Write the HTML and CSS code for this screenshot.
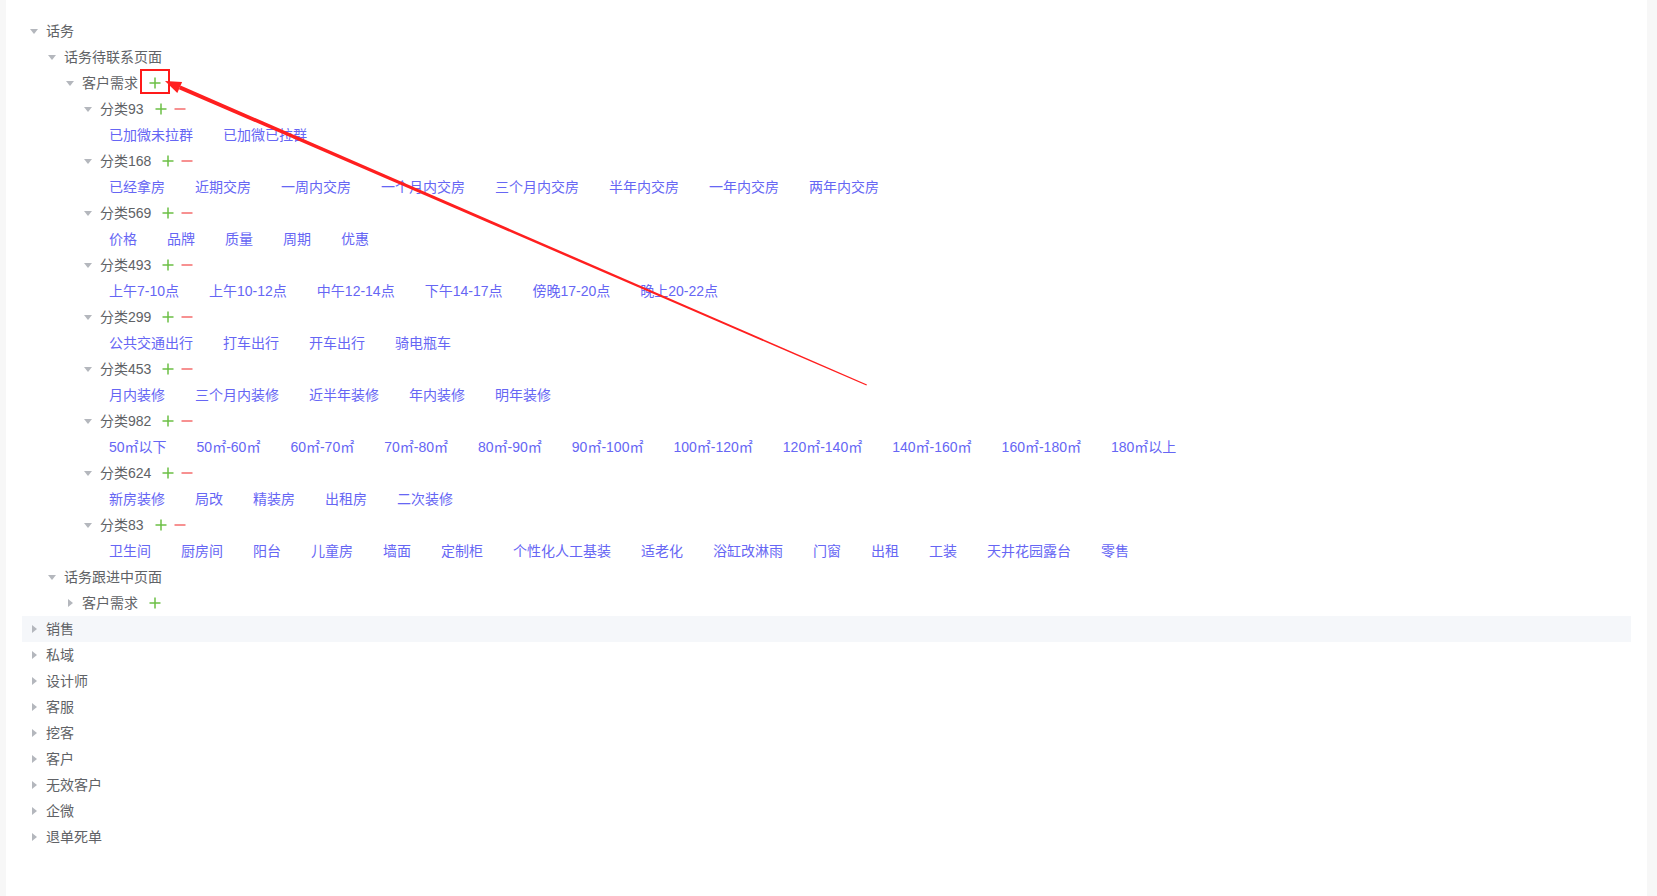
FILE: index.html
```html
<!DOCTYPE html>
<html lang="zh-CN">
<head>
<meta charset="utf-8">
<title>话务</title>
<link rel="stylesheet" href="styles.css">
</head>
<body>
<div class="panel">
  <div class="tree">
    <div class="row l0"><span class="caret open"></span><span class="label">话务</span></div>
    <div class="row l1"><span class="caret open"></span><span class="label">话务待联系页面</span></div>
    <div class="row l2"><span class="caret open"></span><span class="label">客户需求</span><span class="ops"><svg class="ic" viewBox="0 0 12 12"><path class="plus" d="M6 0.5V11.5M0.5 6H11.5"/></svg></span></div>

    <div class="row l3"><span class="caret open"></span><span class="label">分类93</span><span class="ops"><svg class="ic" viewBox="0 0 12 12"><path class="plus" d="M6 0.5V11.5M0.5 6H11.5"/></svg><svg class="ic" viewBox="0 0 12 12"><path class="minus" d="M0.5 6H11.5"/></svg></span></div>
    <div class="tags"><span>已加微未拉群</span><span>已加微已拉群</span></div>

    <div class="row l3"><span class="caret open"></span><span class="label">分类168</span><span class="ops"><svg class="ic" viewBox="0 0 12 12"><path class="plus" d="M6 0.5V11.5M0.5 6H11.5"/></svg><svg class="ic" viewBox="0 0 12 12"><path class="minus" d="M0.5 6H11.5"/></svg></span></div>
    <div class="tags"><span>已经拿房</span><span>近期交房</span><span>一周内交房</span><span>一个月内交房</span><span>三个月内交房</span><span>半年内交房</span><span>一年内交房</span><span>两年内交房</span></div>

    <div class="row l3"><span class="caret open"></span><span class="label">分类569</span><span class="ops"><svg class="ic" viewBox="0 0 12 12"><path class="plus" d="M6 0.5V11.5M0.5 6H11.5"/></svg><svg class="ic" viewBox="0 0 12 12"><path class="minus" d="M0.5 6H11.5"/></svg></span></div>
    <div class="tags"><span>价格</span><span>品牌</span><span>质量</span><span>周期</span><span>优惠</span></div>

    <div class="row l3"><span class="caret open"></span><span class="label">分类493</span><span class="ops"><svg class="ic" viewBox="0 0 12 12"><path class="plus" d="M6 0.5V11.5M0.5 6H11.5"/></svg><svg class="ic" viewBox="0 0 12 12"><path class="minus" d="M0.5 6H11.5"/></svg></span></div>
    <div class="tags"><span>上午7-10点</span><span>上午10-12点</span><span>中午12-14点</span><span>下午14-17点</span><span>傍晚17-20点</span><span>晚上20-22点</span></div>

    <div class="row l3"><span class="caret open"></span><span class="label">分类299</span><span class="ops"><svg class="ic" viewBox="0 0 12 12"><path class="plus" d="M6 0.5V11.5M0.5 6H11.5"/></svg><svg class="ic" viewBox="0 0 12 12"><path class="minus" d="M0.5 6H11.5"/></svg></span></div>
    <div class="tags"><span>公共交通出行</span><span>打车出行</span><span>开车出行</span><span>骑电瓶车</span></div>

    <div class="row l3"><span class="caret open"></span><span class="label">分类453</span><span class="ops"><svg class="ic" viewBox="0 0 12 12"><path class="plus" d="M6 0.5V11.5M0.5 6H11.5"/></svg><svg class="ic" viewBox="0 0 12 12"><path class="minus" d="M0.5 6H11.5"/></svg></span></div>
    <div class="tags"><span>月内装修</span><span>三个月内装修</span><span>近半年装修</span><span>年内装修</span><span>明年装修</span></div>

    <div class="row l3"><span class="caret open"></span><span class="label">分类982</span><span class="ops"><svg class="ic" viewBox="0 0 12 12"><path class="plus" d="M6 0.5V11.5M0.5 6H11.5"/></svg><svg class="ic" viewBox="0 0 12 12"><path class="minus" d="M0.5 6H11.5"/></svg></span></div>
    <div class="tags"><span>50㎡以下</span><span>50㎡-60㎡</span><span>60㎡-70㎡</span><span>70㎡-80㎡</span><span>80㎡-90㎡</span><span>90㎡-100㎡</span><span>100㎡-120㎡</span><span>120㎡-140㎡</span><span>140㎡-160㎡</span><span>160㎡-180㎡</span><span>180㎡以上</span></div>

    <div class="row l3"><span class="caret open"></span><span class="label">分类624</span><span class="ops"><svg class="ic" viewBox="0 0 12 12"><path class="plus" d="M6 0.5V11.5M0.5 6H11.5"/></svg><svg class="ic" viewBox="0 0 12 12"><path class="minus" d="M0.5 6H11.5"/></svg></span></div>
    <div class="tags"><span>新房装修</span><span>局改</span><span>精装房</span><span>出租房</span><span>二次装修</span></div>

    <div class="row l3"><span class="caret open"></span><span class="label">分类83</span><span class="ops"><svg class="ic" viewBox="0 0 12 12"><path class="plus" d="M6 0.5V11.5M0.5 6H11.5"/></svg><svg class="ic" viewBox="0 0 12 12"><path class="minus" d="M0.5 6H11.5"/></svg></span></div>
    <div class="tags"><span>卫生间</span><span>厨房间</span><span>阳台</span><span>儿童房</span><span>墙面</span><span>定制柜</span><span>个性化人工基装</span><span>适老化</span><span>浴缸改淋雨</span><span>门窗</span><span>出租</span><span>工装</span><span>天井花园露台</span><span>零售</span></div>

    <div class="row l1"><span class="caret open"></span><span class="label">话务跟进中页面</span></div>
    <div class="row l2"><span class="caret"></span><span class="label">客户需求</span><span class="ops"><svg class="ic" viewBox="0 0 12 12"><path class="plus" d="M6 0.5V11.5M0.5 6H11.5"/></svg></span></div>

    <div class="row l0 hover"><span class="caret"></span><span class="label">销售</span></div>
    <div class="row l0"><span class="caret"></span><span class="label">私域</span></div>
    <div class="row l0"><span class="caret"></span><span class="label">设计师</span></div>
    <div class="row l0"><span class="caret"></span><span class="label">客服</span></div>
    <div class="row l0"><span class="caret"></span><span class="label">挖客</span></div>
    <div class="row l0"><span class="caret"></span><span class="label">客户</span></div>
    <div class="row l0"><span class="caret"></span><span class="label">无效客户</span></div>
    <div class="row l0"><span class="caret"></span><span class="label">企微</span></div>
    <div class="row l0"><span class="caret"></span><span class="label">退单死单</span></div>
  </div>
</div>

<div class="mark-box"></div>
<svg class="annot" viewBox="0 0 1657 896" width="1657" height="896">
  <polygon class="arrow" points="178.9,89.2 180.5,85.6 867.0,384.4 866.4,385.6"/>
  <polygon class="arrow" points="165,81 177.3,92.9 182.1,81.9"/>
</svg>
</body>
</html>
```

FILE: styles.css
```css
html, body {
  margin: 0;
  padding: 0;
}

body {
  background: #f7f7f7;
  font-family: "Liberation Sans", "Noto Sans CJK SC", sans-serif;
  font-size: 14px;
  color: #606266;
  min-height: 896px;
  position: relative;
}

.panel {
  background: #ffffff;
  margin: 0 10px 0 6px;
  padding: 18px 16px 40px 16px;
  min-height: 838px;
}

.tree {
  display: flex;
  flex-direction: column;
}

.row {
  display: flex;
  align-items: center;
  height: 26px;
  line-height: 26px;
}

.row.hover {
  background: #f5f7fa;
}

.l0 { padding-left: 0; }
.l1 { padding-left: 18px; }
.l2 { padding-left: 36px; }
.l3 { padding-left: 54px; }

.caret {
  width: 24px;
  height: 26px;
  flex: none;
  display: flex;
  align-items: center;
  justify-content: center;
}

.caret::before {
  content: "";
  display: block;
  width: 0;
  height: 0;
  border-top: 4px solid transparent;
  border-bottom: 4px solid transparent;
  border-left: 5px solid #b4b7bd;
}

.caret.open::before {
  border-left: 4px solid transparent;
  border-right: 4px solid transparent;
  border-top: 5px solid #b4b7bd;
  border-bottom: 0;
}

.label {
  white-space: nowrap;
}

.ops {
  display: flex;
  align-items: center;
  gap: 7px;
  margin-left: 11px;
}

.ic {
  width: 12px;
  height: 12px;
  display: block;
}

.ic path {
  fill: none;
  stroke-width: 1.5;
}

.ic .plus { stroke: #6cc046; }
.ic .minus { stroke: #f56c6c; }

.tags {
  display: flex;
  align-items: center;
  gap: 30px;
  height: 26px;
  line-height: 26px;
  padding-left: 87px;
  color: #6666f4;
  white-space: nowrap;
}

.mark-box {
  position: absolute;
  left: 140px;
  top: 69px;
  width: 26px;
  height: 21px;
  border: 2px solid #ff1a1a;
}

.annot {
  position: absolute;
  left: 0;
  top: 0;
  pointer-events: none;
}

.arrow {
  fill: #ff1f1f;
}
```
